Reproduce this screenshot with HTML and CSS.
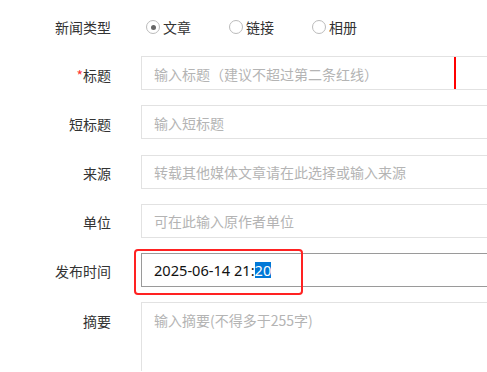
FILE: index.html
```html
<!DOCTYPE html>
<html lang="zh-CN">
<head>
<meta charset="utf-8">
<link rel="stylesheet" href="styles.css">
</head>
<body>
<form class="form">
  <div class="row row-radio">
    <label class="label">新闻类型</label>
    <div class="radios">
      <span class="radio checked"><span class="dot"></span>文章</span>
      <span class="radio"><span class="dot"></span>链接</span>
      <span class="radio"><span class="dot"></span>相册</span>
    </div>
  </div>
  <div class="row">
    <label class="label"><span class="req">*</span>标题</label>
    <div class="field">
      <div class="input placeholder">输入标题（建议不超过第二条红线）</div>
      <span class="redline"></span>
    </div>
  </div>
  <div class="row">
    <label class="label">短标题</label>
    <div class="field"><div class="input placeholder">输入短标题</div></div>
  </div>
  <div class="row">
    <label class="label">来源</label>
    <div class="field"><div class="input placeholder">转载其他媒体文章请在此选择或输入来源</div></div>
  </div>
  <div class="row">
    <label class="label">单位</label>
    <div class="field"><div class="input placeholder">可在此输入原作者单位</div></div>
  </div>
  <div class="row">
    <label class="label">发布时间</label>
    <div class="field">
      <div class="input date">2025-06-14 21:<span class="sel">20</span></div>
      <span class="highlight"></span>
    </div>
  </div>
  <div class="row row-area">
    <label class="label">摘要</label>
    <div class="field"><div class="input area placeholder">输入摘要(不得多于255字)</div></div>
  </div>
</form>
</body>
</html>
```

FILE: styles.css
```css
html, body {
  margin: 0;
  padding: 0;
  background: #fff;
  overflow: hidden;
}
body {
  width: 487px;
  height: 372px;
  font-family: "Noto Sans CJK SC", "Noto Sans", sans-serif;
  font-size: 14px;
  color: #333;
}
.form {
  display: flex;
  flex-direction: column;
  gap: 15.2px;
  padding-top: 8px;
}
.row {
  display: flex;
  align-items: center;
  height: 34px;
}
.row-radio {
  margin-bottom: -1px;
}
.row-area {
  align-items: flex-start;
  height: 69px;
}
.label {
  width: 111px;
  flex: none;
  text-align: right;
  padding-right: 30px;
  line-height: 20px;
  padding-top: 3px;
  color: #333;
}
.row-area .label {
  padding-top: 9px;
}
.req {
  color: #f33;
}
.radios {
  display: flex;
  align-items: center;
  padding-left: 5px;
  padding-top: 3px;
}
.radio {
  display: flex;
  align-items: center;
  margin-right: 38px;
  line-height: 20px;
}
.dot {
  width: 12px;
  height: 12px;
  border: 1px solid #bbb;
  border-radius: 50%;
  margin-right: 3px;
  margin-top: 1px;
  position: relative;
  box-sizing: border-box;
  box-sizing: content-box;
}
.radio.checked .dot::after {
  content: "";
  position: absolute;
  left: 3.5px;
  top: 3.5px;
  width: 5px;
  height: 5px;
  border-radius: 50%;
  background: #666;
}
.field {
  position: relative;
  flex: 1;
  min-width: 0;
  height: 100%;
}
.input {
  box-sizing: border-box;
  height: 34px;
  border: 1px solid #e2e2e2;
  border-right: none;
  padding: 0 12px;
  display: flex;
  align-items: center;
  white-space: nowrap;
  overflow: hidden;
  line-height: 20px;
  padding-top: 1px;
}
.placeholder {
  color: #b4b4b4;
}
.area {
  height: 69px;
  border-bottom: none;
  align-items: flex-start;
  padding-top: 7px;
}
.redline {
  position: absolute;
  left: 313px;
  top: 1px;
  width: 2px;
  height: 32px;
  background: #f00;
}
.date {
  border-color: #9a9a9a;
  color: #111;
  font-family: "Noto Sans", sans-serif;
  font-size: 14.6px;
}
.sel {
  background: #0078d7;
  color: #fff;
  line-height: 16px;
}
.highlight {
  position: absolute;
  left: -7px;
  top: -4px;
  width: 169px;
  height: 46px;
  box-sizing: border-box;
  border: 2px solid #f22;
  border-radius: 4px;
}
```
